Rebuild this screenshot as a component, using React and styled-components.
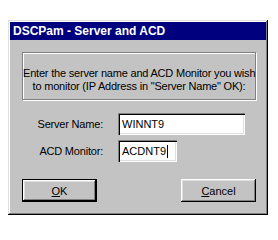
import React from 'react';
import styled, { createGlobalStyle } from 'styled-components';

const GlobalStyle = createGlobalStyle`
  html, body {
    margin: 0;
    padding: 0;
    background: #ffffff;
  }
  body {
    font-family: 'Liberation Sans', Arial, sans-serif;
  }
`;

function App() {
  return (
    <>
      <GlobalStyle />
      <Page>
        <Window>
          <TitleBar>DSCPam - Server and ACD</TitleBar>
          <Body>
            <GroupBox>
              <Prompt>
                Enter the server name and ACD Monitor you wish
                <br />
                to monitor (IP Address in "Server Name" OK):
              </Prompt>
            </GroupBox>

            <Form>
              <Label>Server Name:</Label>
              <Field width="127px">WINNT9</Field>
              <Label>ACD Monitor:</Label>
              <Field width="59px">
                ACDNT9
                <Caret />
              </Field>
            </Form>

            <Buttons>
              <Button $default>
                <u>O</u>K
              </Button>
              <Button>
                <u>C</u>ancel
              </Button>
            </Buttons>
          </Body>
        </Window>
      </Page>
    </>
  );
}

const Page = styled.div`
  padding: 20px 0 0 8px;
`;

const Window = styled.div`
  width: 260px;
  box-sizing: border-box;
  padding: 2px;
  background: #c3c3c3;
  box-shadow: inset -1px -1px #000000, inset 1px 1px #dfdfdf,
    inset -2px -2px #808080, inset 2px 2px #ffffff;
`;

const TitleBar = styled.div`
  height: 18px;
  display: flex;
  align-items: center;
  padding-left: 3px;
  background: #00007f;
  color: #ffffff;
  font-size: 12px;
  font-weight: bold;
  white-space: nowrap;
`;

const Body = styled.div`
  padding: 12px 10px 11px 12px;
  display: flex;
  flex-direction: column;
`;

const GroupBox = styled.div`
  height: 48px;
  box-sizing: border-box;
  border: 1px solid #808080;
  box-shadow: 1px 1px 0 #ffffff, inset 1px 1px 0 #ffffff;
  padding: 14px 0 0;
`;

const Prompt = styled.div`
  font-size: 11px;
  line-height: 13px;
  letter-spacing: -0.2px;
  color: #000000;
  text-align: center;
  white-space: nowrap;
`;

const Form = styled.div`
  display: grid;
  grid-template-columns: 81px auto;
  column-gap: 15px;
  row-gap: 5px;
  align-items: center;
  justify-items: start;
  margin-top: 13px;
`;

const Label = styled.div`
  justify-self: end;
  font-size: 11px;
  letter-spacing: -0.2px;
  color: #000000;
  white-space: nowrap;
`;

const Field = styled.div`
  width: ${(p) => p.width};
  height: 22px;
  box-sizing: border-box;
  display: flex;
  align-items: center;
  padding-left: 4px;
  background: #ffffff;
  font-size: 11px;
  color: #000000;
  box-shadow: inset 1px 1px #808080, inset 2px 2px #000000,
    inset -1px -1px #ffffff, inset -2px -2px #dfdfdf;
`;

const Caret = styled.span`
  display: inline-block;
  width: 1px;
  height: 13px;
  margin-left: 1px;
  background: #000000;
`;

const Buttons = styled.div`
  display: flex;
  justify-content: space-between;
  margin-top: 17px;
`;

const Button = styled.div`
  width: 75px;
  height: 23px;
  box-sizing: border-box;
  display: flex;
  align-items: center;
  justify-content: center;
  background: #c3c3c3;
  font-size: 11px;
  color: #000000;
  border: ${(p) => (p.$default ? '1px solid #000000' : 'none')};
  box-shadow: inset -1px -1px #000000, inset 1px 1px #ffffff,
    inset -2px -2px #808080, inset 2px 2px #dfdfdf;

  u {
    text-decoration-thickness: 1px;
    text-underline-offset: 1px;
  }
`;

export default App;
